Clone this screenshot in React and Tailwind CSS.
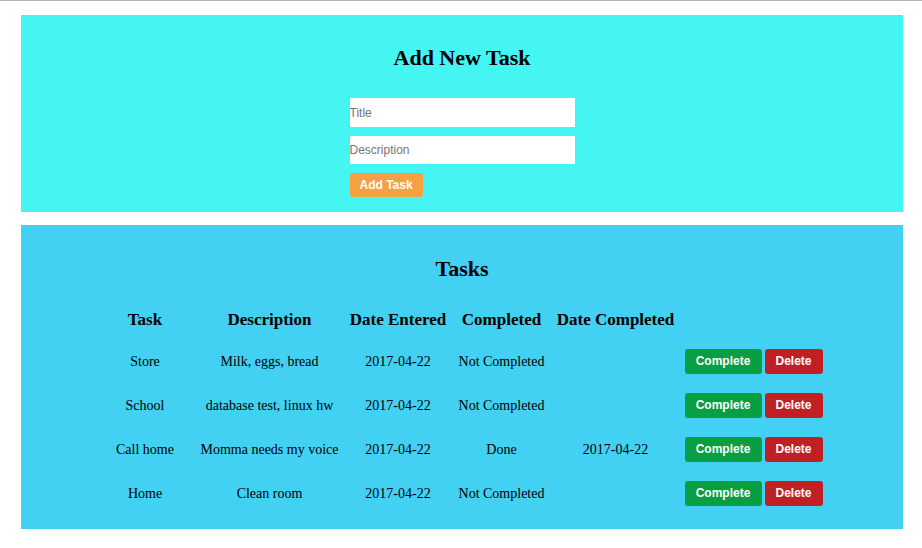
import React from "react";

const tasks = [
  { task: "Store", desc: "Milk, eggs, bread", entered: "2017-04-22", completed: "Not Completed", dateCompleted: "" },
  { task: "School", desc: "database test, linux hw", entered: "2017-04-22", completed: "Not Completed", dateCompleted: "" },
  { task: "Call home", desc: "Momma needs my voice", entered: "2017-04-22", completed: "Done", dateCompleted: "2017-04-22" },
  { task: "Home", desc: "Clean room", entered: "2017-04-22", completed: "Not Completed", dateCompleted: "" },
];

const serif = { fontFamily: '"Liberation Serif", "Times New Roman", serif' };

function Cell({ children, className = "" }) {
  return <div className={`flex items-center justify-center whitespace-nowrap ${className}`}>{children}</div>;
}

export default function App() {
  return (
    <div className="min-h-[548px] w-[922px] bg-white border-t border-[#b3b3b3]" style={serif}>
      <div className="ml-[21px] mt-[14px] w-[882px] bg-[#44f5f1] pt-[30px] pb-[15px] flex flex-col items-center">
        <h2 className="text-[22px] leading-[26px] font-bold text-black">Add New Task</h2>
        <div className="mt-[27px] w-[225px] flex flex-col items-start font-['Liberation_Sans',Arial,sans-serif]">
          <input
            placeholder="Title"
            className="w-[225px] h-[29px] bg-white p-0 text-[12px] text-black placeholder:text-[#757575] outline-none"
          />
          <input
            placeholder="Description"
            className="mt-[9px] w-[225px] h-[28px] bg-white p-0 text-[12px] text-black placeholder:text-[#757575] outline-none"
          />
          <button className="mt-[9px] h-[24px] px-[10px] rounded-[3px] bg-[#f5a142] text-white text-[12px] font-bold leading-none">
            Add Task
          </button>
        </div>
      </div>

      <div className="ml-[21px] mt-[13px] w-[882px] bg-[#42d0f3] pt-[31px] pb-[14px] flex flex-col items-center">
        <h2 className="text-[22px] leading-[26px] font-bold text-black">Tasks</h2>
        <div className="mt-[18px] grid grid-cols-[98px_151px_106px_101px_127px_149px] text-black">
          <Cell className="h-[39px] text-[17px] font-bold">Task</Cell>
          <Cell className="h-[39px] text-[17px] font-bold">Description</Cell>
          <Cell className="h-[39px] text-[17px] font-bold">Date Entered</Cell>
          <Cell className="h-[39px] text-[17px] font-bold">Completed</Cell>
          <Cell className="h-[39px] text-[17px] font-bold">Date Completed</Cell>
          <Cell className="h-[39px]"></Cell>
          {tasks.map((t) => (
            <React.Fragment key={t.task}>
              <Cell className="h-[44px] text-[14px]">{t.task}</Cell>
              <Cell className="h-[44px] text-[14px]">{t.desc}</Cell>
              <Cell className="h-[44px] text-[14px]">{t.entered}</Cell>
              <Cell className="h-[44px] text-[14px]">{t.completed}</Cell>
              <Cell className="h-[44px] text-[14px]">{t.dateCompleted}</Cell>
              <Cell className="h-[44px] gap-[3px] font-['Liberation_Sans',Arial,sans-serif]">
                <button className="w-[77px] h-[25px] rounded-[3px] bg-[#0a9e43] text-white text-[12px] font-bold leading-none">
                  Complete
                </button>
                <button className="w-[58px] h-[25px] rounded-[3px] bg-[#c02024] text-white text-[12px] font-bold leading-none">
                  Delete
                </button>
              </Cell>
            </React.Fragment>
          ))}
        </div>
      </div>
    </div>
  );
}
